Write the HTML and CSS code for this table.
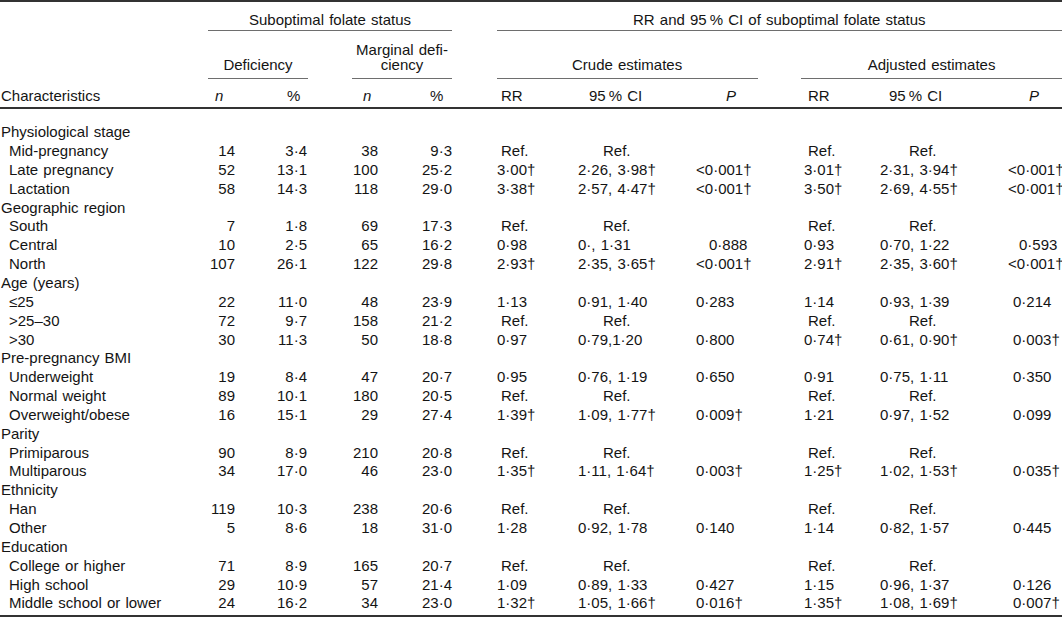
FILE: index.html
```html
<!DOCTYPE html>
<html lang="en">
<head>
<meta charset="utf-8">
<title>Suboptimal folate status</title>
<link rel="stylesheet" href="styles.css">
</head>
<body>
<table class="tbl">
  <colgroup>
    <col class="w-char"><col class="w-n1"><col class="w-pc1"><col class="w-n2"><col class="w-pc2">
    <col class="w-rr1"><col class="w-ci1"><col class="w-p1"><col class="w-rr2"><col class="w-ci2"><col class="w-p2">
  </colgroup>
  <thead>
    <tr class="hr-a">
      <th></th>
      <th colspan="4"><div class="span sub">Suboptimal folate status</div></th>
      <th colspan="6"><div class="span rrall">RR and 95&#8201;% CI of suboptimal folate status</div></th>
    </tr>
    <tr class="hr-b">
      <th></th>
      <th colspan="2" class="bot"><div class="span def">Deficiency</div></th>
      <th colspan="2" class="bot"><div class="span marg">Marginal defi-<br>ciency</div></th>
      <th colspan="3" class="bot"><div class="span crude">Crude estimates</div></th>
      <th colspan="3" class="bot"><div class="span adj">Adjusted estimates</div></th>
    </tr>
    <tr class="hr-c">
      <th class="h-char">Characteristics</th>
      <th class="h-n1"><i>n</i></th>
      <th class="h-pc1">%</th>
      <th class="h-n2"><i>n</i></th>
      <th class="h-pc2">%</th>
      <th class="h-rr1">RR</th>
      <th class="h-ci1">95&#8201;% CI</th>
      <th class="h-p1"><i>P</i></th>
      <th class="h-rr2">RR</th>
      <th class="h-ci2">95&#8201;% CI</th>
      <th class="h-p2"><i>P</i></th>
    </tr>
  </thead>
  <tbody>
    <tr><td class="grp" colspan="11">Physiological stage</td></tr>
    <tr><td class="lbl">Mid-pregnancy</td><td class="n1">14</td><td class="pc1">3·4</td><td class="n2">38</td><td class="pc2">9·3</td><td class="rr1 ref">Ref.</td><td class="ci1 ref">Ref.</td><td class="p1"></td><td class="rr2 ref">Ref.</td><td class="ci2 ref">Ref.</td><td class="p2"></td></tr>
    <tr><td class="lbl">Late pregnancy</td><td class="n1">52</td><td class="pc1">13·1</td><td class="n2">100</td><td class="pc2">25·2</td><td class="rr1">3·00†</td><td class="ci1">2·26, 3·98†</td><td class="p1">&lt;0·001†</td><td class="rr2">3·01†</td><td class="ci2">2·31, 3·94†</td><td class="p2 lt">&lt;0·001†</td></tr>
    <tr><td class="lbl">Lactation</td><td class="n1">58</td><td class="pc1">14·3</td><td class="n2">118</td><td class="pc2">29·0</td><td class="rr1">3·38†</td><td class="ci1">2·57, 4·47†</td><td class="p1">&lt;0·001†</td><td class="rr2">3·50†</td><td class="ci2">2·69, 4·55†</td><td class="p2 lt">&lt;0·001†</td></tr>
    <tr><td class="grp" colspan="11">Geographic region</td></tr>
    <tr><td class="lbl">South</td><td class="n1">7</td><td class="pc1">1·8</td><td class="n2">69</td><td class="pc2">17·3</td><td class="rr1 ref">Ref.</td><td class="ci1 ref">Ref.</td><td class="p1"></td><td class="rr2 ref">Ref.</td><td class="ci2 ref">Ref.</td><td class="p2"></td></tr>
    <tr><td class="lbl">Central</td><td class="n1">10</td><td class="pc1">2·5</td><td class="n2">65</td><td class="pc2">16·2</td><td class="rr1">0·98</td><td class="ci1">0·, 1·31</td><td class="p1 mid">0·888</td><td class="rr2">0·93</td><td class="ci2">0·70, 1·22</td><td class="p2 mid">0·593</td></tr>
    <tr><td class="lbl">North</td><td class="n1">107</td><td class="pc1">26·1</td><td class="n2">122</td><td class="pc2">29·8</td><td class="rr1">2·93†</td><td class="ci1">2·35, 3·65†</td><td class="p1">&lt;0·001†</td><td class="rr2">2·91†</td><td class="ci2">2·35, 3·60†</td><td class="p2 lt">&lt;0·001†</td></tr>
    <tr><td class="grp" colspan="11">Age (years)</td></tr>
    <tr><td class="lbl">≤25</td><td class="n1">22</td><td class="pc1">11·0</td><td class="n2">48</td><td class="pc2">23·9</td><td class="rr1">1·13</td><td class="ci1">0·91, 1·40</td><td class="p1">0·283</td><td class="rr2">1·14</td><td class="ci2">0·93, 1·39</td><td class="p2">0·214</td></tr>
    <tr><td class="lbl">&gt;25–30</td><td class="n1">72</td><td class="pc1">9·7</td><td class="n2">158</td><td class="pc2">21·2</td><td class="rr1 ref">Ref.</td><td class="ci1 ref">Ref.</td><td class="p1"></td><td class="rr2 ref">Ref.</td><td class="ci2 ref">Ref.</td><td class="p2"></td></tr>
    <tr><td class="lbl">&gt;30</td><td class="n1">30</td><td class="pc1">11·3</td><td class="n2">50</td><td class="pc2">18·8</td><td class="rr1">0·97</td><td class="ci1">0·79,1·20</td><td class="p1">0·800</td><td class="rr2">0·74†</td><td class="ci2">0·61, 0·90†</td><td class="p2">0·003†</td></tr>
    <tr><td class="grp" colspan="11">Pre-pregnancy BMI</td></tr>
    <tr><td class="lbl">Underweight</td><td class="n1">19</td><td class="pc1">8·4</td><td class="n2">47</td><td class="pc2">20·7</td><td class="rr1">0·95</td><td class="ci1">0·76, 1·19</td><td class="p1">0·650</td><td class="rr2">0·91</td><td class="ci2">0·75, 1·11</td><td class="p2">0·350</td></tr>
    <tr><td class="lbl">Normal weight</td><td class="n1">89</td><td class="pc1">10·1</td><td class="n2">180</td><td class="pc2">20·5</td><td class="rr1 ref">Ref.</td><td class="ci1 ref">Ref.</td><td class="p1"></td><td class="rr2 ref">Ref.</td><td class="ci2 ref">Ref.</td><td class="p2"></td></tr>
    <tr><td class="lbl">Overweight/obese</td><td class="n1">16</td><td class="pc1">15·1</td><td class="n2">29</td><td class="pc2">27·4</td><td class="rr1">1·39†</td><td class="ci1">1·09, 1·77†</td><td class="p1">0·009†</td><td class="rr2">1·21</td><td class="ci2">0·97, 1·52</td><td class="p2">0·099</td></tr>
    <tr><td class="grp" colspan="11">Parity</td></tr>
    <tr><td class="lbl">Primiparous</td><td class="n1">90</td><td class="pc1">8·9</td><td class="n2">210</td><td class="pc2">20·8</td><td class="rr1 ref">Ref.</td><td class="ci1 ref">Ref.</td><td class="p1"></td><td class="rr2 ref">Ref.</td><td class="ci2 ref">Ref.</td><td class="p2"></td></tr>
    <tr><td class="lbl">Multiparous</td><td class="n1">34</td><td class="pc1">17·0</td><td class="n2">46</td><td class="pc2">23·0</td><td class="rr1">1·35†</td><td class="ci1">1·11, 1·64†</td><td class="p1">0·003†</td><td class="rr2">1·25†</td><td class="ci2">1·02, 1·53†</td><td class="p2">0·035†</td></tr>
    <tr><td class="grp" colspan="11">Ethnicity</td></tr>
    <tr><td class="lbl">Han</td><td class="n1">119</td><td class="pc1">10·3</td><td class="n2">238</td><td class="pc2">20·6</td><td class="rr1 ref">Ref.</td><td class="ci1 ref">Ref.</td><td class="p1"></td><td class="rr2 ref">Ref.</td><td class="ci2 ref">Ref.</td><td class="p2"></td></tr>
    <tr><td class="lbl">Other</td><td class="n1">5</td><td class="pc1">8·6</td><td class="n2">18</td><td class="pc2">31·0</td><td class="rr1">1·28</td><td class="ci1">0·92, 1·78</td><td class="p1">0·140</td><td class="rr2">1·14</td><td class="ci2">0·82, 1·57</td><td class="p2">0·445</td></tr>
    <tr><td class="grp" colspan="11">Education</td></tr>
    <tr><td class="lbl">College or higher</td><td class="n1">71</td><td class="pc1">8·9</td><td class="n2">165</td><td class="pc2">20·7</td><td class="rr1 ref">Ref.</td><td class="ci1 ref">Ref.</td><td class="p1"></td><td class="rr2 ref">Ref.</td><td class="ci2 ref">Ref.</td><td class="p2"></td></tr>
    <tr><td class="lbl">High school</td><td class="n1">29</td><td class="pc1">10·9</td><td class="n2">57</td><td class="pc2">21·4</td><td class="rr1">1·09</td><td class="ci1">0·89, 1·33</td><td class="p1">0·427</td><td class="rr2">1·15</td><td class="ci2">0·96, 1·37</td><td class="p2">0·126</td></tr>
    <tr><td class="lbl">Middle school or lower</td><td class="n1">24</td><td class="pc1">16·2</td><td class="n2">34</td><td class="pc2">23·0</td><td class="rr1">1·32†</td><td class="ci1">1·05, 1·66†</td><td class="p1">0·016†</td><td class="rr2">1·35†</td><td class="ci2">1·08, 1·69†</td><td class="p2">0·007†</td></tr>
  </tbody>
</table>
</body>
</html>
```
FILE: styles.css
```css
html, body {
  margin: 0;
  padding: 0;
  background: #ffffff;
  overflow: hidden;
}

.tbl {
  width: 1062px;
  table-layout: fixed;
  border-collapse: separate;
  border-spacing: 0;
  border-top: 2px solid #333333;
  border-bottom: 2px solid #333333;
  font-family: "Liberation Sans", Arial, sans-serif;
  font-size: 15px;
  color: #141414;
  word-spacing: 1px;
  white-space: nowrap;
}

.w-char { width: 208px; }
.w-n1 { width: 37px; }
.w-pc1 { width: 63px; }
.w-n2 { width: 80px; }
.w-pc2 { width: 72px; }
.w-rr1 { width: 115px; }
.w-ci1 { width: 115px; }
.w-p1 { width: 100px; }
.w-rr2 { width: 85px; }
.w-ci2 { width: 130px; }
.w-p2 { width: 57px; }

th {
  font-weight: normal;
  padding: 0;
  text-align: center;
}

.span {
  border-bottom: 1px solid #6e6e6e;
}

/* header row A */
.hr-a th {
  line-height: 17px;
  padding-top: 8.5px;
  vertical-align: bottom;
}
.hr-a .span { padding-bottom: 2.5px; }
.sub { margin-right: 8px; }
.rrall { margin-left: 36.5px; }

/* header row B */
.hr-b th {
  line-height: 15px;
  padding-top: 10.55px;
  vertical-align: bottom;
}
.hr-b .span { padding-bottom: 6.45px; }
.marg { margin-left: 44px; margin-right: 8px; }
.crude { margin-left: 36.5px; margin-right: 32.4px; }
.adj { margin-left: 11px; }

/* header row C */
.hr-c th {
  line-height: 17px;
  padding-top: 7.55px;
  padding-bottom: 3.45px;
  border-bottom: 2px solid #333333;
  text-align: left;
}
.h-char { padding-left: 1px; }
.h-n1 { padding-left: 7px; }
.h-pc1 { padding-left: 42px; }
.h-n2 { padding-left: 55px; }
.h-pc2 { padding-left: 42px; }
.h-rr1 { padding-left: 41px; }
.h-ci1 { padding-left: 14px; }
.h-p1 { padding-left: 36px; }
.h-rr2 { padding-left: 18px; }
.h-ci2 { padding-left: 14px; }
.h-p2 { padding-left: 24px; }

/* body */
td {
  padding: 0;
  line-height: 18.85px;
  text-align: left;
  vertical-align: baseline;
}
tbody tr:first-child td { padding-top: 14.3px; }
tbody tr:last-child td { padding-bottom: 2.2px; }

.grp { padding-left: 1px; }
.lbl { padding-left: 9px; }

.n1 { text-align: right; padding-right: 10px; }
.pc1 { text-align: right; padding-right: 1px; }
.n2 { text-align: right; padding-right: 10px; }
.pc2 { text-align: right; padding-right: 8px; }

.rr1 { padding-left: 37px; }
.rr1.ref { padding-left: 41px; }
.ci1 { padding-left: 3px; }
.ci1.ref { padding-left: 28px; }
.p1 { padding-left: 6px; }
.p1.mid { padding-left: 19px; }

.rr2 { padding-left: 14px; }
.rr2.ref { padding-left: 18px; }
.ci2 { padding-left: 5px; }
.ci2.ref { padding-left: 34px; }
.p2 { padding-left: 8px; }
.p2.mid { padding-left: 14px; }
.p2.lt { padding-left: 3px; }
```
